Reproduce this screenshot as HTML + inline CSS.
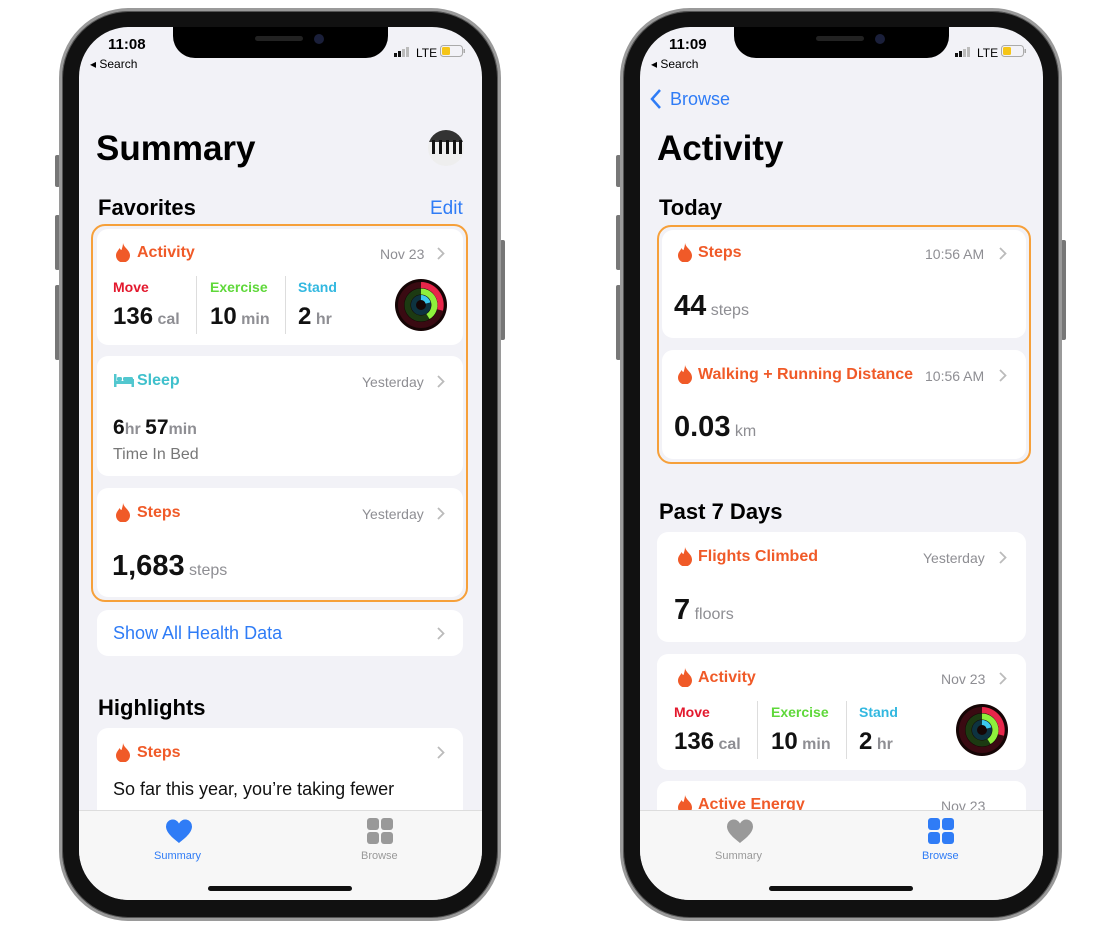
<!DOCTYPE html>
<html><head><meta charset="utf-8"><style>
*{margin:0;padding:0;box-sizing:border-box}
body{width:1120px;height:928px;background:#fff;position:relative;overflow:hidden;font-family:"Liberation Sans",sans-serif;color:#000}
.w{position:absolute;top:0;width:560px;height:928px}
.ab{position:absolute;white-space:nowrap}
.frame{position:absolute;left:59px;top:8px;width:442px;height:913px;border-radius:70px;background:#111;border:3px solid #9a9a9a;box-shadow:0 0 0 1px #555 inset}
.btn{position:absolute;background:#777;border-radius:2px}
.screen{position:absolute;left:79px;top:27px;width:403px;height:873px;border-radius:50px;background:#f2f2f7;overflow:hidden}
.notch{position:absolute;left:173px;top:27px;width:215px;height:31px;background:#000;border-radius:0 0 22px 22px}
.card{position:absolute;background:#fff;border-radius:11px}
.t{font-size:16px;font-weight:bold;color:#f05a28}
.g{color:#8e8e93;font-size:14px}
.big{font-size:26px;font-weight:bold;color:#111}
.u{font-size:16px;color:#8e8e93;font-weight:bold}
.hb{font-size:22px;font-weight:bold}
.sep{position:absolute;width:1px;background:#ddd}
.orange{position:absolute;border:2.5px solid #f6a03a;border-radius:14px}
.tab{position:absolute;left:79px;top:810px;width:403px;height:90px;background:#f7f7f7;border-top:1px solid #ddd;border-radius:0 0 50px 50px}
.home{position:absolute;left:208px;top:886px;width:144px;height:5px;border-radius:3px;background:#111}
</style></head><body>

<!-- LEFT PHONE -->
<div class="w" style="left:0">
<div class="btn" style="left:55px;top:155px;width:5px;height:32px"></div>
<div class="btn" style="left:55px;top:215px;width:5px;height:55px"></div>
<div class="btn" style="left:55px;top:285px;width:5px;height:75px"></div>
<div class="btn" style="left:500px;top:240px;width:5px;height:100px"></div>
<div class="frame"></div>
<div class="screen"></div>
<div class="notch"></div>
<div class="ab" style="left:255px;top:36px;width:48px;height:5px;border-radius:3px;background:#222"></div>
<div class="ab" style="left:314px;top:34px;width:10px;height:10px;border-radius:5px;background:#1a1f3a"></div>
<div class="ab" style="left:108px;top:36px;font-size:15px;font-weight:bold">11:08</div>
<div class="ab" style="left:90px;top:57px;font-size:12px">◂ Search</div>
<svg class="ab" style="left:394px;top:46px" width="18" height="12"><rect x="0" y="7" width="3" height="4" fill="#111"/><rect x="4" y="5" width="3" height="6" fill="#111"/><rect x="8" y="3" width="3" height="8" fill="#bbb"/><rect x="12" y="1" width="3" height="10" fill="#bbb"/></svg>
<div class="ab" style="left:416px;top:46px;font-size:12px">LTE</div>
<svg class="ab" style="left:440px;top:45px" width="26" height="13"><rect x="0.5" y="0.5" width="22" height="11" rx="3" fill="none" stroke="#aaa"/><rect x="2" y="2" width="8" height="8" rx="1.5" fill="#f5c518"/><rect x="23.5" y="4" width="1.5" height="4" fill="#aaa"/></svg>

<div class="ab" style="left:96px;top:129px;font-size:35px;font-weight:bold">Summary</div>
<svg class="ab" style="left:428px;top:130px" width="36" height="36"><defs><clipPath id="c1"><circle cx="18" cy="18" r="18"/></clipPath></defs><g clip-path="url(#c1)"><rect width="36" height="36" fill="#eee"/><rect width="36" height="12" fill="#333"/><rect x="4" y="10" width="3" height="14" fill="#111"/><rect x="11" y="10" width="3" height="14" fill="#111"/><rect x="18" y="10" width="3" height="14" fill="#111"/><rect x="25" y="10" width="3" height="14" fill="#111"/><rect x="31" y="10" width="3" height="14" fill="#111"/></g></svg>
<div class="ab hb" style="left:98px;top:195px">Favorites</div>
<div class="ab" style="left:430px;top:198px;font-size:19px;color:#2f7cf6">Edit</div>

<div class="orange" style="left:91px;top:224px;width:377px;height:378px"></div>
<!-- activity card -->
<div class="card" style="left:97px;top:229px;width:366px;height:116px"></div>
<svg class="ab" style="left:116px;top:243px" width="14" height="19"><path d="M7 0C8 5 14 7 14 12.5A7 7 0 0 1 0 12.5C0 9 2.5 7.5 3.5 5C4.5 7 5.5 7 5.5 7C6.5 4 7 2 7 0Z" fill="#f05a28"/></svg>
<div class="ab t" style="left:137px;top:244px">Activity</div>
<div class="ab g" style="left:380px;top:246px">Nov 23</div>
<svg class="ab" style="left:437px;top:247px" width="8" height="13"><path d="M1 1L6.5 6.5L1 12" stroke="#bbb" stroke-width="1.8" fill="none"/></svg>
<div class="ab" style="left:113px;top:279px;font-size:14px;font-weight:bold;color:#e3182d">Move</div>
<div class="ab" style="left:210px;top:279px;font-size:14px;font-weight:bold;color:#5fd83a">Exercise</div>
<div class="ab" style="left:298px;top:279px;font-size:14px;font-weight:bold;color:#32b8e0">Stand</div>
<div class="sep" style="left:196px;top:276px;height:58px"></div>
<div class="sep" style="left:285px;top:276px;height:58px"></div>
<div class="ab" style="left:113px;top:303px"><span class="big" style="font-size:24px">136</span> <span class="u">cal</span></div>
<div class="ab" style="left:210px;top:303px"><span class="big" style="font-size:24px">10</span> <span class="u">min</span></div>
<div class="ab" style="left:298px;top:303px"><span class="big" style="font-size:24px">2</span> <span class="u">hr</span></div>
<svg class="ab" style="left:395px;top:279px" width="52" height="52"><circle cx="26" cy="26" r="26" fill="#150505"/><circle cx="26" cy="26" r="20" fill="none" stroke="#3a0a12" stroke-width="6"/><path d="M26 6A20 20 0 0 1 45 31" fill="none" stroke="#e8264a" stroke-width="6"/><circle cx="26" cy="26" r="13.5" fill="none" stroke="#1c3a12" stroke-width="6"/><path d="M26 12.5A13.5 13.5 0 0 1 33 37.5" fill="none" stroke="#8ef03c" stroke-width="6"/><circle cx="26" cy="26" r="7.5" fill="none" stroke="#0d3340" stroke-width="5"/><path d="M26 18.5A7.5 7.5 0 0 1 33 24" fill="none" stroke="#3cc8ee" stroke-width="5"/></svg>

<!-- sleep -->
<div class="card" style="left:97px;top:356px;width:366px;height:120px"></div>
<svg class="ab" style="left:114px;top:374px" width="20" height="13"><rect x="0" y="0" width="2.5" height="13" fill="#52c7cf"/><rect x="17.5" y="5" width="2.5" height="8" fill="#52c7cf"/><rect x="0" y="7" width="20" height="3" fill="#52c7cf"/><rect x="3" y="3" width="5" height="4" rx="1.5" fill="#52c7cf"/><rect x="9" y="3" width="10" height="4" rx="1.5" fill="#52c7cf"/></svg>
<div class="ab t" style="left:137px;top:372px;color:#3fc0cc">Sleep</div>
<div class="ab g" style="left:362px;top:374px">Yesterday</div>
<svg class="ab" style="left:437px;top:375px" width="8" height="13"><path d="M1 1L6.5 6.5L1 12" stroke="#bbb" stroke-width="1.8" fill="none"/></svg>
<div class="ab" style="left:113px;top:416px"><span class="big" style="font-size:21px">6</span><span class="u">hr </span><span class="big" style="font-size:21px">57</span><span class="u">min</span></div>
<div class="ab" style="left:113px;top:446px;font-size:16px;color:#777">Time In Bed</div>

<!-- steps -->
<div class="card" style="left:97px;top:488px;width:366px;height:109px"></div>
<svg class="ab" style="left:116px;top:503px" width="14" height="19"><path d="M7 0C8 5 14 7 14 12.5A7 7 0 0 1 0 12.5C0 9 2.5 7.5 3.5 5C4.5 7 5.5 7 5.5 7C6.5 4 7 2 7 0Z" fill="#f05a28"/></svg>
<div class="ab t" style="left:137px;top:504px">Steps</div>
<div class="ab g" style="left:362px;top:506px">Yesterday</div>
<svg class="ab" style="left:437px;top:507px" width="8" height="13"><path d="M1 1L6.5 6.5L1 12" stroke="#bbb" stroke-width="1.8" fill="none"/></svg>
<div class="ab" style="left:112px;top:550px"><span class="big" style="font-size:29px">1,683</span><span class="u" style="font-weight:normal"> steps</span></div>

<div class="card" style="left:97px;top:610px;width:366px;height:46px"></div>
<div class="ab" style="left:113px;top:623px;font-size:18px;color:#2f7cf6">Show All Health Data</div>
<svg class="ab" style="left:437px;top:627px" width="8" height="13"><path d="M1 1L6.5 6.5L1 12" stroke="#bbb" stroke-width="1.8" fill="none"/></svg>

<div class="ab hb" style="left:98px;top:695px">Highlights</div>
<div class="card" style="left:97px;top:728px;width:366px;height:120px"></div>
<svg class="ab" style="left:116px;top:743px" width="14" height="19"><path d="M7 0C8 5 14 7 14 12.5A7 7 0 0 1 0 12.5C0 9 2.5 7.5 3.5 5C4.5 7 5.5 7 5.5 7C6.5 4 7 2 7 0Z" fill="#f05a28"/></svg>
<div class="ab t" style="left:137px;top:744px">Steps</div>
<svg class="ab" style="left:437px;top:746px" width="8" height="13"><path d="M1 1L6.5 6.5L1 12" stroke="#bbb" stroke-width="1.8" fill="none"/></svg>
<div class="ab" style="left:113px;top:779px;font-size:18px;color:#111">So far this year, you’re taking fewer</div>

<div class="tab"></div>
<svg class="ab" style="left:165px;top:818px" width="28" height="26"><path d="M14 25C12 23 1 16 1 8.5A6.8 6.8 0 0 1 14 5.5A6.8 6.8 0 0 1 27 8.5C27 16 16 23 14 25Z" fill="#2f7cf6"/></svg>
<div class="ab" style="left:154px;top:850px;font-size:11px;color:#2f7cf6">Summary</div>
<svg class="ab" style="left:367px;top:818px" width="27" height="27"><rect x="0" y="0" width="12" height="12" rx="3" fill="#999"/><rect x="14" y="0" width="12" height="12" rx="3" fill="#999"/><rect x="0" y="14" width="12" height="12" rx="3" fill="#999"/><rect x="14" y="14" width="12" height="12" rx="3" fill="#999"/></svg>
<div class="ab" style="left:361px;top:850px;font-size:11px;color:#999">Browse</div>
<div class="home"></div>
</div>

<!-- RIGHT PHONE -->
<div class="w" style="left:561px">
<div class="btn" style="left:55px;top:155px;width:5px;height:32px"></div>
<div class="btn" style="left:55px;top:215px;width:5px;height:55px"></div>
<div class="btn" style="left:55px;top:285px;width:5px;height:75px"></div>
<div class="btn" style="left:500px;top:240px;width:5px;height:100px"></div>
<div class="frame"></div>
<div class="screen"></div>
<div class="notch"></div>
<div class="ab" style="left:255px;top:36px;width:48px;height:5px;border-radius:3px;background:#222"></div>
<div class="ab" style="left:314px;top:34px;width:10px;height:10px;border-radius:5px;background:#1a1f3a"></div>
<div class="ab" style="left:108px;top:36px;font-size:15px;font-weight:bold">11:09</div>
<div class="ab" style="left:90px;top:57px;font-size:12px">◂ Search</div>
<svg class="ab" style="left:394px;top:46px" width="18" height="12"><rect x="0" y="7" width="3" height="4" fill="#111"/><rect x="4" y="5" width="3" height="6" fill="#111"/><rect x="8" y="3" width="3" height="8" fill="#bbb"/><rect x="12" y="1" width="3" height="10" fill="#bbb"/></svg>
<div class="ab" style="left:416px;top:46px;font-size:12px">LTE</div>
<svg class="ab" style="left:440px;top:45px" width="26" height="13"><rect x="0.5" y="0.5" width="22" height="11" rx="3" fill="none" stroke="#aaa"/><rect x="2" y="2" width="8" height="8" rx="1.5" fill="#f5c518"/><rect x="23.5" y="4" width="1.5" height="4" fill="#aaa"/></svg>

<svg class="ab" style="left:89px;top:89px" width="12" height="20"><path d="M10 1L2 10L10 19" stroke="#2f7cf6" stroke-width="2.5" fill="none"/></svg>
<div class="ab" style="left:109px;top:89px;font-size:18px;color:#2f7cf6">Browse</div>
<div class="ab" style="left:96px;top:129px;font-size:35px;font-weight:bold">Activity</div>
<div class="ab hb" style="left:98px;top:195px">Today</div>

<div class="orange" style="left:96px;top:225px;width:374px;height:239px"></div>
<div class="card" style="left:101px;top:230px;width:364px;height:108px"></div>
<svg class="ab" style="left:117px;top:243px" width="14" height="19"><path d="M7 0C8 5 14 7 14 12.5A7 7 0 0 1 0 12.5C0 9 2.5 7.5 3.5 5C4.5 7 5.5 7 5.5 7C6.5 4 7 2 7 0Z" fill="#f05a28"/></svg>
<div class="ab t" style="left:137px;top:244px">Steps</div>
<div class="ab g" style="left:364px;top:246px">10:56 AM</div>
<svg class="ab" style="left:438px;top:247px" width="8" height="13"><path d="M1 1L6.5 6.5L1 12" stroke="#bbb" stroke-width="1.8" fill="none"/></svg>
<div class="ab" style="left:113px;top:290px"><span class="big" style="font-size:29px">44</span><span class="u" style="font-weight:normal"> steps</span></div>

<div class="card" style="left:101px;top:350px;width:364px;height:109px"></div>
<svg class="ab" style="left:117px;top:365px" width="14" height="19"><path d="M7 0C8 5 14 7 14 12.5A7 7 0 0 1 0 12.5C0 9 2.5 7.5 3.5 5C4.5 7 5.5 7 5.5 7C6.5 4 7 2 7 0Z" fill="#f05a28"/></svg>
<div class="ab t" style="left:137px;top:366px">Walking + Running Distance</div>
<div class="ab g" style="left:364px;top:368px">10:56 AM</div>
<svg class="ab" style="left:438px;top:369px" width="8" height="13"><path d="M1 1L6.5 6.5L1 12" stroke="#bbb" stroke-width="1.8" fill="none"/></svg>
<div class="ab" style="left:113px;top:411px"><span class="big" style="font-size:29px">0.03</span><span class="u" style="font-weight:normal"> km</span></div>

<div class="ab hb" style="left:98px;top:499px">Past 7 Days</div>
<div class="card" style="left:96px;top:532px;width:369px;height:110px"></div>
<svg class="ab" style="left:117px;top:547px" width="14" height="19"><path d="M7 0C8 5 14 7 14 12.5A7 7 0 0 1 0 12.5C0 9 2.5 7.5 3.5 5C4.5 7 5.5 7 5.5 7C6.5 4 7 2 7 0Z" fill="#f05a28"/></svg>
<div class="ab t" style="left:137px;top:548px">Flights Climbed</div>
<div class="ab g" style="left:362px;top:550px">Yesterday</div>
<svg class="ab" style="left:438px;top:551px" width="8" height="13"><path d="M1 1L6.5 6.5L1 12" stroke="#bbb" stroke-width="1.8" fill="none"/></svg>
<div class="ab" style="left:113px;top:594px"><span class="big" style="font-size:29px">7</span><span class="u" style="font-weight:normal"> floors</span></div>

<div class="card" style="left:96px;top:654px;width:369px;height:116px"></div>
<svg class="ab" style="left:117px;top:668px" width="14" height="19"><path d="M7 0C8 5 14 7 14 12.5A7 7 0 0 1 0 12.5C0 9 2.5 7.5 3.5 5C4.5 7 5.5 7 5.5 7C6.5 4 7 2 7 0Z" fill="#f05a28"/></svg>
<div class="ab t" style="left:137px;top:669px">Activity</div>
<div class="ab g" style="left:380px;top:671px">Nov 23</div>
<svg class="ab" style="left:438px;top:672px" width="8" height="13"><path d="M1 1L6.5 6.5L1 12" stroke="#bbb" stroke-width="1.8" fill="none"/></svg>
<div class="ab" style="left:113px;top:704px;font-size:14px;font-weight:bold;color:#e3182d">Move</div>
<div class="ab" style="left:210px;top:704px;font-size:14px;font-weight:bold;color:#5fd83a">Exercise</div>
<div class="ab" style="left:298px;top:704px;font-size:14px;font-weight:bold;color:#32b8e0">Stand</div>
<div class="sep" style="left:196px;top:701px;height:58px"></div>
<div class="sep" style="left:285px;top:701px;height:58px"></div>
<div class="ab" style="left:113px;top:728px"><span class="big" style="font-size:24px">136</span> <span class="u">cal</span></div>
<div class="ab" style="left:210px;top:728px"><span class="big" style="font-size:24px">10</span> <span class="u">min</span></div>
<div class="ab" style="left:298px;top:728px"><span class="big" style="font-size:24px">2</span> <span class="u">hr</span></div>
<svg class="ab" style="left:395px;top:704px" width="52" height="52"><circle cx="26" cy="26" r="26" fill="#150505"/><circle cx="26" cy="26" r="20" fill="none" stroke="#3a0a12" stroke-width="6"/><path d="M26 6A20 20 0 0 1 45 31" fill="none" stroke="#e8264a" stroke-width="6"/><circle cx="26" cy="26" r="13.5" fill="none" stroke="#1c3a12" stroke-width="6"/><path d="M26 12.5A13.5 13.5 0 0 1 33 37.5" fill="none" stroke="#8ef03c" stroke-width="6"/><circle cx="26" cy="26" r="7.5" fill="none" stroke="#0d3340" stroke-width="5"/><path d="M26 18.5A7.5 7.5 0 0 1 33 24" fill="none" stroke="#3cc8ee" stroke-width="5"/></svg>

<div class="card" style="left:96px;top:781px;width:369px;height:60px"></div>
<svg class="ab" style="left:117px;top:795px" width="14" height="19"><path d="M7 0C8 5 14 7 14 12.5A7 7 0 0 1 0 12.5C0 9 2.5 7.5 3.5 5C4.5 7 5.5 7 5.5 7C6.5 4 7 2 7 0Z" fill="#f05a28"/></svg>
<div class="ab t" style="left:137px;top:796px">Active Energy</div>
<div class="ab g" style="left:380px;top:798px">Nov 23</div>

<div class="tab"></div>
<svg class="ab" style="left:165px;top:818px" width="28" height="26"><path d="M14 25C12 23 1 16 1 8.5A6.8 6.8 0 0 1 14 5.5A6.8 6.8 0 0 1 27 8.5C27 16 16 23 14 25Z" fill="#999"/></svg>
<div class="ab" style="left:154px;top:850px;font-size:11px;color:#999">Summary</div>
<svg class="ab" style="left:367px;top:818px" width="27" height="27"><rect x="0" y="0" width="12" height="12" rx="3" fill="#2f7cf6"/><rect x="14" y="0" width="12" height="12" rx="3" fill="#2f7cf6"/><rect x="0" y="14" width="12" height="12" rx="3" fill="#2f7cf6"/><rect x="14" y="14" width="12" height="12" rx="3" fill="#2f7cf6"/></svg>
<div class="ab" style="left:361px;top:850px;font-size:11px;color:#2f7cf6">Browse</div>
<div class="home"></div>
</div>
</body></html>
